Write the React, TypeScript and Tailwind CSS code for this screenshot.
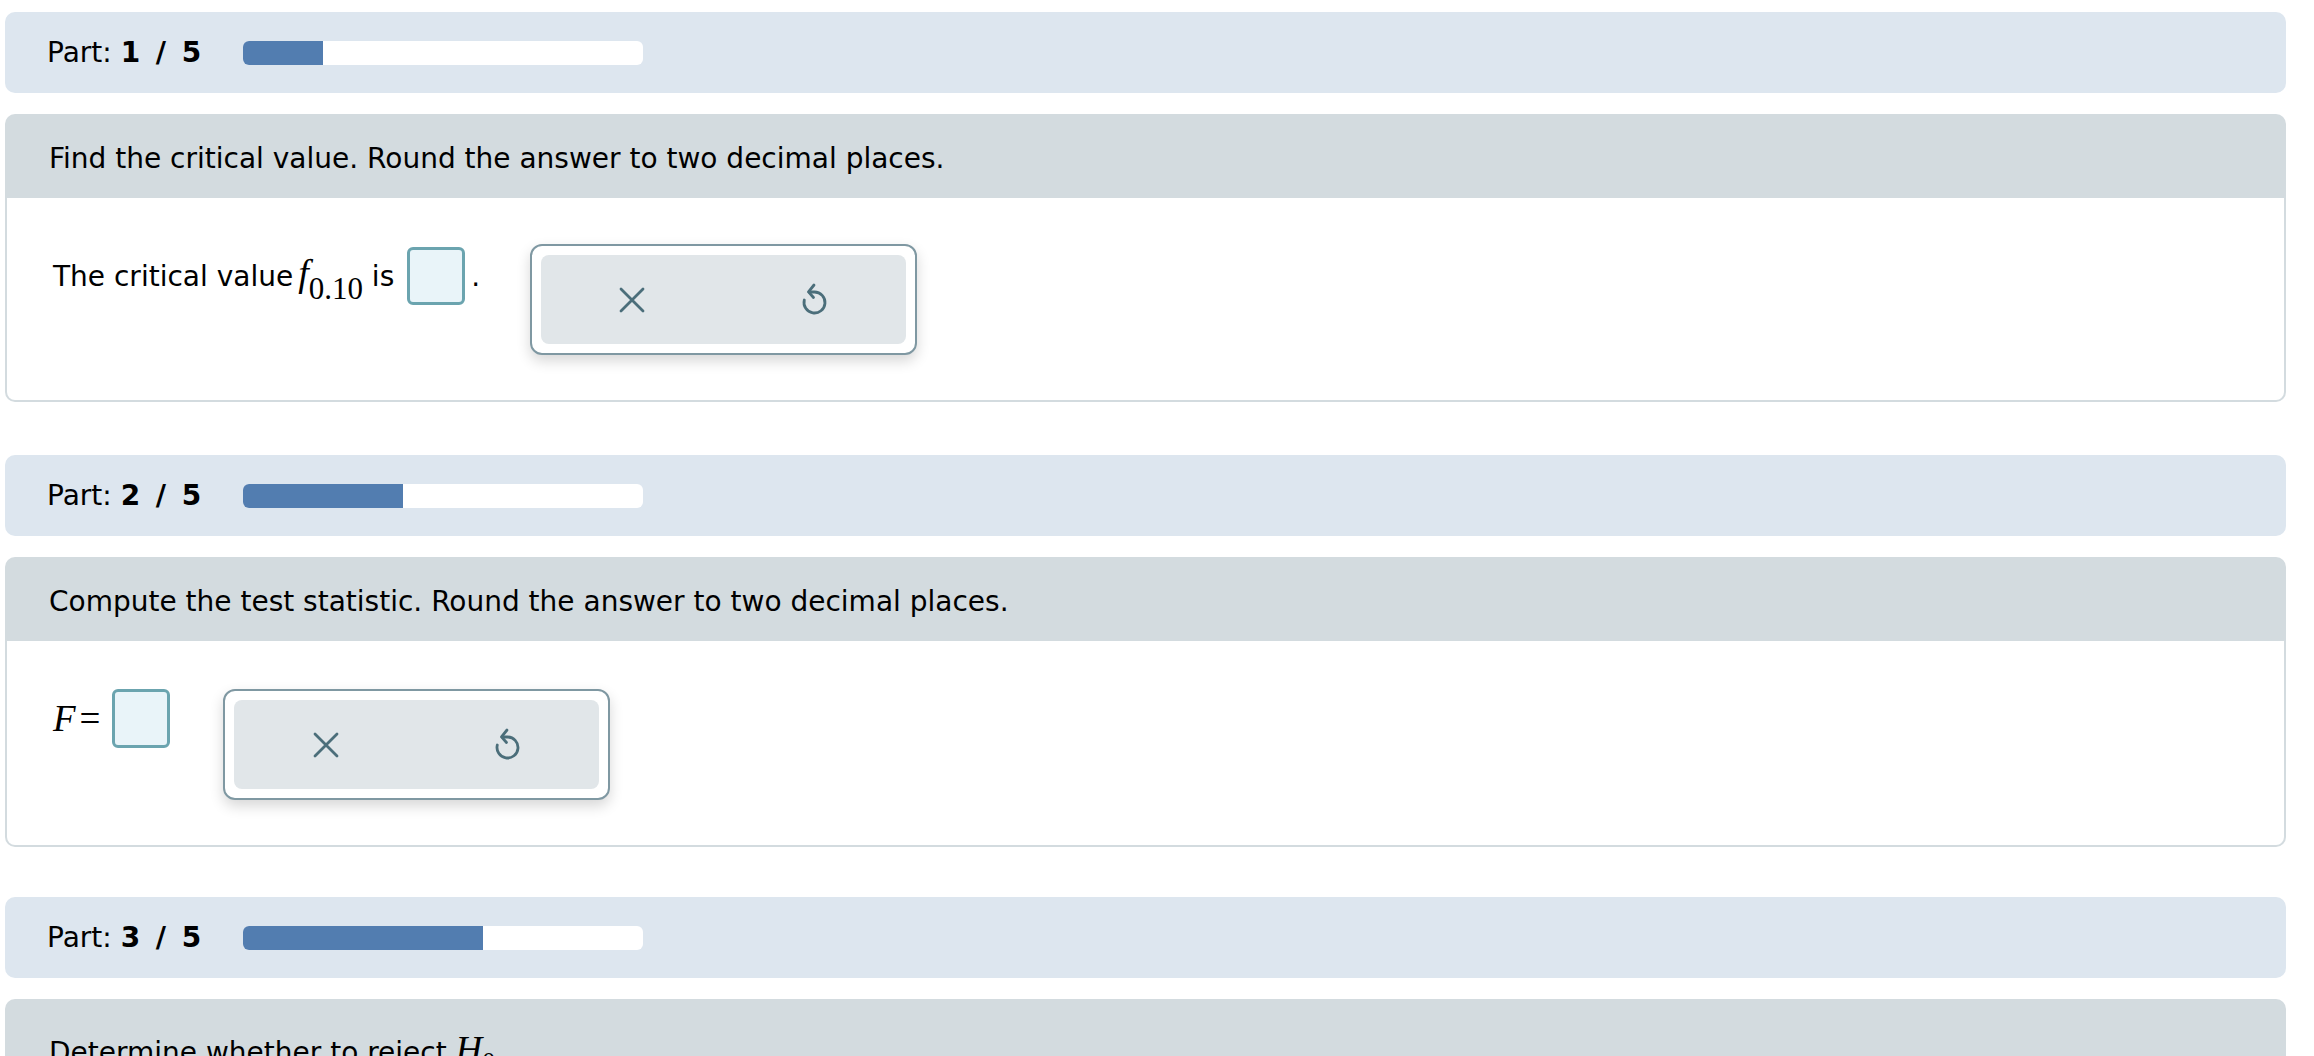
import React from "react";

const SANS = "font-['Verdana','DejaVu_Sans',sans-serif]";
const SERIF = "font-['Liberation_Serif','Times_New_Roman',serif]";

function XIcon() {
  return (
    <svg width="26" height="26" viewBox="0 0 26 26" fill="none">
      <path d="M2 2 L24 24 M24 2 L2 24" stroke="#4b6e7a" strokeWidth="2.8" strokeLinecap="round" />
    </svg>
  );
}

function UndoIcon() {
  return (
    <svg width="28" height="33" viewBox="0 0 28 33" fill="none">
      <path
        d="M8 9 H13.5 A10.5 10.5 0 1 1 3.3 17"
        stroke="#4b6e7a"
        strokeWidth="2.8"
        strokeLinecap="round"
        strokeLinejoin="round"
      />
      <path d="M13 2 L7.5 8.8 L12.5 14.5" stroke="#4b6e7a" strokeWidth="2.8" strokeLinecap="round" strokeLinejoin="round" />
    </svg>
  );
}

function ToolGroup() {
  return (
    <div className="flex h-[111px] w-[387px] rounded-[12px] border-2 border-[#7f98a2] bg-white p-[9px] shadow-[0_6px_14px_rgba(0,0,0,0.16)]">
      <div className="flex flex-1 rounded-[8px] bg-[#e1e6e9]">
        <button className="flex flex-1 items-center justify-center">
          <XIcon />
        </button>
        <button className="flex flex-1 items-center justify-center">
          <UndoIcon />
        </button>
      </div>
    </div>
  );
}

function PartBar({ n }: { n: number }) {
  return (
    <div className="flex h-[81px] items-center rounded-[10px] bg-[#dde6ef] pl-[42px]">
      <span className="w-[196px] whitespace-nowrap text-[28px] leading-[33px] text-black">
        Part:{" "}
        <b className="font-bold">
          {n}
          <span className="px-[6px]"> / </span>5
        </b>
      </span>
      <div className="h-[24px] w-[400px] overflow-hidden rounded-[6px] bg-white">
        <div className="h-full bg-[#527db0]" style={{ width: n * 80 }} />
      </div>
    </div>
  );
}

function Header({ children, extra }: { children: React.ReactNode; extra?: string }) {
  return (
    <div
      className={
        "rounded-t-[10px] bg-[#d3dbdf] pl-[44px] text-[28px] leading-[33px] text-black " +
        (extra ? extra : "pt-[28px] pb-[23px]")
      }
    >
      {children}
    </div>
  );
}

function Input({ h }: { h: string }) {
  return <div className={"w-[58px] rounded-[6px] border-[3px] border-[#6ba4af] bg-[#e9f4f9] " + h} />;
}

export default function App() {
  return (
    <div className={"h-[1056px] w-full overflow-hidden bg-white pl-[5px] pr-[28px] pt-[12px] text-black " + SANS}>
      {/* Section 1 */}
      <PartBar n={1} />
      <div className="mt-[21px]">
        <Header>Find the critical value. Round the answer to two decimal places.</Header>
        <div className="rounded-b-[10px] border-2 border-t-0 border-[#d3dbdf] bg-white pl-[46px] pt-[46px] pb-[45px]">
          <div className="flex items-start">
            <div className="mt-[16px] whitespace-nowrap text-[28px] leading-[33px]">
              The critical value
              <span className={SERIF + " ml-[5px] text-[38px] italic leading-[0]"}>f</span>
              <span className={SERIF + " relative top-[13px] text-[31px] leading-[0]"}>0.10</span> is
            </div>
            <div className="ml-[13px] mt-[3px]">
              <Input h="h-[58px]" />
            </div>
            <span className="ml-[6px] mt-[16px] text-[28px] leading-[33px]">.</span>
            <div className="ml-[50px]">
              <ToolGroup />
            </div>
          </div>
        </div>
      </div>

      {/* Section 2 */}
      <div className="mt-[53px]">
        <PartBar n={2} />
      </div>
      <div className="mt-[21px]">
        <Header>Compute the test statistic. Round the answer to two decimal places.</Header>
        <div className="rounded-b-[10px] border-2 border-t-0 border-[#d3dbdf] bg-white pl-[46px] pt-[48px] pb-[45px]">
          <div className="flex items-start">
            <div className="flex items-center">
              <span className={SERIF + " whitespace-nowrap text-[37px] leading-[40px]"}>
                <i>F</i>
                <span className="ml-[4px]">=</span>
              </span>
              <div className="ml-[12px]">
                <Input h="h-[59px]" />
              </div>
            </div>
            <div className="ml-[53px]">
              <ToolGroup />
            </div>
          </div>
        </div>
      </div>

      {/* Section 3 */}
      <div className="mt-[50px]">
        <PartBar n={3} />
      </div>
      <div className="mt-[21px]">
        <Header extra="pt-[37px] pb-[25px]">
          Determine whether to reject{" "}
          <span className={SERIF + " text-[37px] italic leading-[0]"}>H</span>
          <span className={SERIF + " relative top-[8px] text-[26px] leading-[0]"}>0</span>.
        </Header>
        <div className="h-[200px] rounded-b-[10px] border-2 border-t-0 border-[#d3dbdf] bg-white" />
      </div>
    </div>
  );
}
